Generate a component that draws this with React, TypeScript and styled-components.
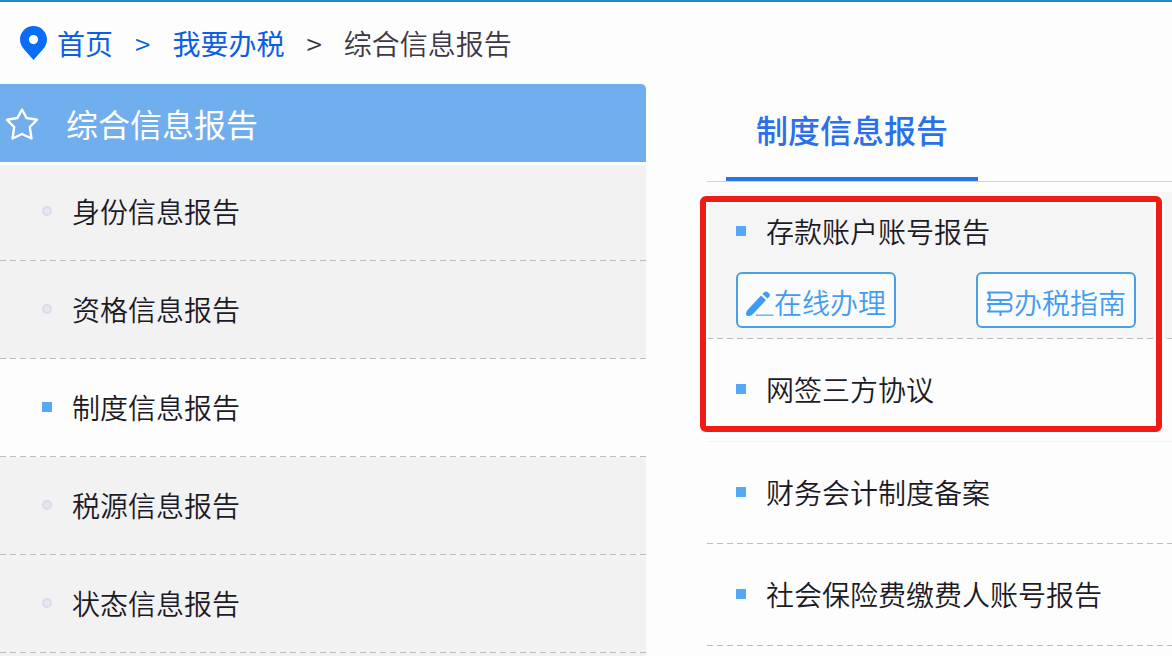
import React from "react";
import styled, { createGlobalStyle, css } from "styled-components";

const GlobalStyle = createGlobalStyle`
  *, *::before, *::after { box-sizing: border-box; }
  body {
    margin: 0;
    background: #fdfdfe;
    color: #1c1a24;
    font-family: "Noto Sans CJK SC", sans-serif;
    font-size: 28px;
    font-weight: 350;
  }
  ul, ol, h1, h2 { margin: 0; padding: 0; font: inherit; list-style: none; }
  a { color: inherit; text-decoration: none; }
`;

const dashed = css`
  background-image: repeating-linear-gradient(to right, #bcbcbe 0 6px, transparent 6px 10px);
  background-repeat: no-repeat;
  background-position: left bottom;
  background-size: 100% 1px;
`;

const Page = styled.div`
  min-height: 100vh;
  display: flex;
  flex-direction: column;
  border-top: 2px solid #1f86c8;
`;

const Breadcrumb = styled.nav`
  height: 82px;
  padding-left: 20px;
  display: flex;
  align-items: center;
`;

const Crumbs = styled.ol`
  display: flex;
  align-items: center;
  padding-left: 10px;
  white-space: nowrap;
`;

const Crumb = styled.li<{ $current?: boolean }>`
  color: ${(p) => (p.$current ? "#3c3744" : "#0a5fe4")};
  font-weight: ${(p) => (p.$current ? 350 : 400)};

  &:not(:first-child)::before {
    content: ">";
    margin: 0 22px;
    font-weight: 350;
  }
`;

const Columns = styled.div`
  flex: 1;
  display: grid;
  grid-template-columns: minmax(0, 646fr) minmax(0, 465fr);
  column-gap: 61px;
`;

const Sidebar = styled.aside`
  background: #f2f2f3;
  border-top-right-radius: 5px;
`;

const SidebarTitle = styled.h2`
  height: 78px;
  padding-left: 5px;
  display: flex;
  align-items: center;
  gap: 27px;
  background: #70aeee;
  border-top-right-radius: 5px;
  color: #fff;
  font-size: 32px;
  font-weight: 400;
`;

const CategoryList = styled.ul`
  padding-top: 1px;
  background: linear-gradient(#fdfdfe, #fdfdfe) top / 100% 3px no-repeat;
`;

const SidebarLink = styled.a<{ $active?: boolean }>`
  height: 98px;
  padding: 0 0 2px 42px;
  display: flex;
  align-items: center;
  gap: 20px;
  background-color: ${(p) => (p.$active ? "#fdfdfe" : "transparent")};
  ${dashed}
`;

const Bullet = styled.span<{ $idle?: boolean }>`
  flex: none;
  width: 10px;
  height: 10px;
  ${(p) =>
    p.$idle
      ? css`
          border: 2px solid #d9dce8;
          border-radius: 50%;
          background: #e6e8f0;
        `
      : css`
          background: #55a7f8;
        `}
`;

const Tabs = styled.div`
  height: 98px;
  padding-left: 19px;
  display: flex;
  align-items: stretch;
  border-bottom: 1px solid #d2d2da;
`;

const Tab = styled.a`
  padding: 0 30px 4px;
  display: flex;
  align-items: center;
  border-bottom: 4px solid #2a74ea;
  color: #2a70ea;
  font-size: 32px;
  font-weight: 500;
`;

const ReportList = styled.ul`
  position: relative;
  padding-top: 10px;
`;

const Highlight = styled.div`
  position: absolute;
  top: 14px;
  left: -7px;
  right: 10px;
  height: 236px;
  border: 6px solid #ee1c12;
  border-radius: 6px;
  box-shadow: 0 0 0 2px #fff, inset 0 0 0 2px #fff;
  pointer-events: none;
`;

const Report = styled.li<{ $open?: boolean; $plain?: boolean }>`
  padding-left: 29px;
  ${(p) => (p.$plain ? "border-bottom: 1px solid #f4f4f7;" : dashed)}
  ${(p) =>
    p.$open &&
    css`
      padding-bottom: 11px;
      background-color: #f5f5f6;
    `}
`;

const ReportLink = styled.a<{ $tall?: boolean }>`
  height: ${(p) => (p.$tall ? 102 : 80)}px;
  padding-bottom: 2px;
  display: flex;
  align-items: center;
  gap: 20px;
`;

const Actions = styled.div`
  display: flex;
  flex-wrap: wrap;
  gap: 12px 80px;
`;

const ActionButton = styled.button`
  height: 56px;
  padding: 4px 8px 0;
  display: flex;
  align-items: center;
  border: 2px solid #4a9fe6;
  border-radius: 6px;
  background: #fafbfd;
  color: #449cf2;
  font: inherit;
  white-space: nowrap;
`;

const PinIcon = () => (
  <svg width="27" height="34" viewBox="0 0 27 34" aria-hidden="true">
    <path
      fill="#0a6cf5"
      fillRule="evenodd"
      d="M13.5 0C6 0 0 6 0 13.4c0 4 1.600 6.900 4.200 10.100L13.500 34l9.300-10.500c2.600-3.200 4.200-6.100 4.200-10.100C27 6 21 0 13.500 0Zm0 9a4.600 4.600 0 1 1 0 9.200a4.600 4.600 0 0 1 0-9.200Z"
    />
  </svg>
);

const StarIcon = () => (
  <svg width="34" height="34" viewBox="0 0 34 34" aria-hidden="true">
    <path
      d="M17 3.500L21.600 12L32 13.800L24.800 21L26.500 32.500L17 28L7.500 32.500L9.200 21L2 13.800L12.400 12Z"
      fill="none"
      stroke="#fff"
      strokeWidth="2.400"
      strokeLinejoin="round"
    />
  </svg>
);

const PencilIcon = () => (
  <svg width="28" height="28" viewBox="0 0 28 28" aria-hidden="true">
    <path d="M1.500 22L15 7.500L20 12L6.500 26.500Q5 28 2 28Q0 28 0 26Q0 23.500 1.500 22Z" fill="#3a9cf4" />
    <path d="M16.500 6L18.500 4q1.500-1.200 3 0l1.800 1.600q1.400 1.400 0 3L21.500 10.500Z" fill="#3a9cf4" />
    <path d="M10 27.200H27.500" stroke="#6fb3f2" strokeWidth="1.500" />
  </svg>
);

const GuideIcon = () => (
  <svg width="28" height="28" viewBox="0 0 28 28" aria-hidden="true">
    <g fill="none" stroke="#449cf2" strokeWidth="2" strokeLinejoin="round">
      <path d="M2 4.500H22Q25.500 4.500 25.500 8.200T22 12H2Q6 8.200 2 4.500Z" />
      <path d="M2 16H22Q25.500 16 25.500 19.700T22 23.500H2Q6 19.700 2 16Z" />
      <path d="M14.500 12V16M14.500 23.500V28" />
    </g>
  </svg>
);

const categories = ["身份信息报告", "资格信息报告", "制度信息报告", "税源信息报告", "状态信息报告"];
const activeCategory = "制度信息报告";

export default function App() {
  return (
    <Page>
      <GlobalStyle />
      <Breadcrumb aria-label="breadcrumb">
        <PinIcon />
        <Crumbs>
          <Crumb><a href="#home">首页</a></Crumb>
          <Crumb><a href="#tax">我要办税</a></Crumb>
          <Crumb $current aria-current="page">综合信息报告</Crumb>
        </Crumbs>
      </Breadcrumb>
      <Columns>
        <Sidebar>
          <SidebarTitle>
            <StarIcon />
            综合信息报告
          </SidebarTitle>
          <CategoryList>
            {categories.map((name) => (
              <li key={name}>
                <SidebarLink href="#category" $active={name === activeCategory}>
                  <Bullet $idle={name !== activeCategory} />
                  {name}
                </SidebarLink>
              </li>
            ))}
          </CategoryList>
        </Sidebar>
        <main>
          <Tabs>
            <Tab href="#reports">制度信息报告</Tab>
          </Tabs>
          <ReportList>
            <Report $open>
              <ReportLink href="#deposit"><Bullet />存款账户账号报告</ReportLink>
              <Actions>
                <ActionButton type="button"><PencilIcon />在线办理</ActionButton>
                <ActionButton type="button"><GuideIcon />办税指南</ActionButton>
              </Actions>
            </Report>
            <Report $plain>
              <ReportLink $tall href="#agreement"><Bullet />网签三方协议</ReportLink>
            </Report>
            <Report>
              <ReportLink $tall href="#accounting"><Bullet />财务会计制度备案</ReportLink>
            </Report>
            <Report>
              <ReportLink $tall href="#insurance"><Bullet />社会保险费缴费人账号报告</ReportLink>
            </Report>
            <Highlight />
          </ReportList>
        </main>
      </Columns>
    </Page>
  );
}
